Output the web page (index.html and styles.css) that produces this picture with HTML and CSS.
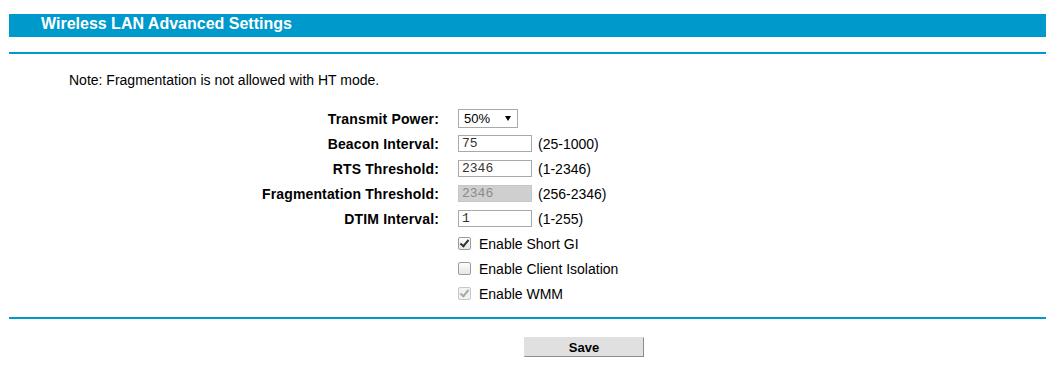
FILE: index.html
```html
<!DOCTYPE html>
<html lang="en">
<head>
<meta charset="UTF-8">
<title>Wireless LAN Advanced Settings</title>
<link rel="stylesheet" href="styles.css">
</head>
<body>
<div class="page">
  <!-- Title -->
  <div class="title-bar">Wireless LAN Advanced Settings</div>
  <div class="rule top-rule"></div>

  <p class="note">Note: Fragmentation is not allowed with HT mode.</p>

  <!-- Settings -->
  <div class="form">
    <div class="row">
      <label class="label">Transmit Power:</label>
      <span class="select-wrap">
        <select class="select">
          <option>50%</option>
        </select>
      </span>
    </div>
    <div class="row">
      <label class="label">Beacon Interval:</label>
      <input class="field" type="text" value="75">
      <span class="range">(25-1000)</span>
    </div>
    <div class="row">
      <label class="label">RTS Threshold:</label>
      <input class="field" type="text" value="2346">
      <span class="range">(1-2346)</span>
    </div>
    <div class="row">
      <label class="label">Fragmentation Threshold:</label>
      <input class="field" type="text" value="2346" disabled>
      <span class="range">(256-2346)</span>
    </div>
    <div class="row">
      <label class="label">DTIM Interval:</label>
      <input class="field" type="text" value="1">
      <span class="range">(1-255)</span>
    </div>
    <div class="row">
      <span class="label"></span>
      <input class="check" type="checkbox" checked>
      <span class="check-text">Enable Short GI</span>
    </div>
    <div class="row">
      <span class="label"></span>
      <input class="check" type="checkbox">
      <span class="check-text">Enable Client Isolation</span>
    </div>
    <div class="row">
      <span class="label"></span>
      <input class="check" type="checkbox" checked disabled>
      <span class="check-text">Enable WMM</span>
    </div>
  </div>

  <div class="rule bottom-rule"></div>

  <!-- Buttons -->
  <div class="actions">
    <button class="btn" type="button">Save</button>
  </div>
</div>
</body>
</html>
```

FILE: styles.css
```css
:root {
  --blue:#0099cc;
  --text:#000;
}

html, body {
  margin:0; padding:0;
  background:#fff;
  color:var(--text);
  font-family:"Liberation Sans", Arial, sans-serif;
  font-size:14px;
}

.page {
  padding:14px 1px 0 9px;
}

/* Title */
.title-bar {
  height:23px;
  line-height:20px;
  background:var(--blue);
  color:#fff;
  font-weight:700;
  font-size:16px;
  padding-left:32px;
}
.rule {height:2px; background:var(--blue);}
.top-rule {margin-top:15px;}
.bottom-rule {margin-top:11px;}

/* Note */
.note {margin:18px 0 0 60px; line-height:16px;}

/* Form rows */
.form {margin-top:18px;}
.row {display:flex; align-items:center; height:25px; line-height:16px;}
.label {width:430px; text-align:right; font-weight:700; letter-spacing:0.15px; margin-right:19px; flex:none;}
.range {margin-left:6px;}

.field {
  box-sizing:border-box;
  width:74px; height:17px;
  margin:0; padding:0 3px;
  border:1px solid #a9a9a9;
  background:#fff;
  color:#333;
  font-family:"Liberation Mono", "Courier New", monospace;
  font-size:13px;
}
.field:disabled {background:#cfcfcf; color:#8a8a8a; border-color:#c6c6c6;}

/* Select */
.select-wrap {position:relative; display:inline-block;}
.select {
  -webkit-appearance:none; appearance:none;
  box-sizing:border-box;
  width:60px; height:19px;
  margin:0; padding:0 0 0 5px;
  border:1px solid #a9a9a9;
  border-radius:0;
  background:#fff;
  color:#000;
  font-family:"Liberation Sans", Arial, sans-serif;
  font-size:13px;
  line-height:17px;
}
.select-wrap::after {
  content:"";
  position:absolute; left:47px; top:7px;
  border-left:3.5px solid transparent;
  border-right:3.5px solid transparent;
  border-top:5px solid #000;
  pointer-events:none;
}

/* Checkboxes */
.check {
  -webkit-appearance:none; appearance:none;
  position:relative;
  width:13px; height:13px;
  margin:0 8px 0 0;
  border:1px solid #9c9c9c;
  border-radius:2px;
  background:linear-gradient(#fdfdfd,#e6e6e6);
  box-sizing:border-box;
}
.check:checked::after {
  content:"";
  position:absolute; left:3px; top:0px;
  width:3px; height:7px;
  border-right:2px solid #333;
  border-bottom:2px solid #333;
  transform:rotate(40deg);
}
.check:disabled {border-color:#c8c8c8; background:#f2f2f2;}
.check:disabled::after {border-color:#a8a8a8;}

/* Buttons */
.actions {padding:18px 0 0 515px;}
.btn {
  box-sizing:border-box;
  width:120px; height:20px;
  margin:0; padding:0;
  background:#e0e0e0;
  border:1px solid #e0e0e0;
  border-right-color:#8c8c8c;
  border-bottom-color:#8c8c8c;
  color:#000;
  font-family:"Liberation Sans", Arial, sans-serif;
  font-weight:700;
  font-size:13px;
  cursor:pointer;
}
```
